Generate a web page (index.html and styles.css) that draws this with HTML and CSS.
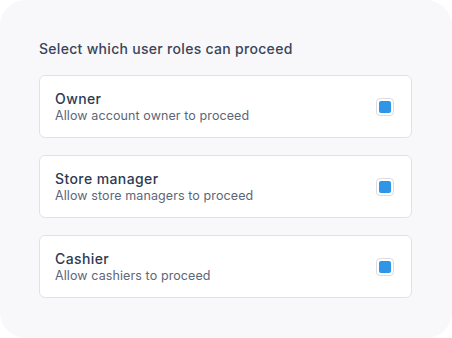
FILE: index.html
```html
<!DOCTYPE html>
<html lang="en">
<head>
  <meta charset="UTF-8">
  <title>User roles</title>
  <link rel="stylesheet" href="styles.css">
</head>
<body>
  <div class="panel">
    <h2 class="heading">Select which user roles can proceed</h2>
    <div class="roles">
      <label class="role">
        <div class="role-text">
          <div class="role-title">Owner</div>
          <div class="role-desc">Allow account owner to proceed</div>
        </div>
        <span class="check"><span class="check-fill"></span></span>
      </label>
      <label class="role">
        <div class="role-text">
          <div class="role-title">Store manager</div>
          <div class="role-desc">Allow store managers to proceed</div>
        </div>
        <span class="check"><span class="check-fill"></span></span>
      </label>
      <label class="role">
        <div class="role-text">
          <div class="role-title">Cashier</div>
          <div class="role-desc">Allow cashiers to proceed</div>
        </div>
        <span class="check"><span class="check-fill"></span></span>
      </label>
    </div>
  </div>
</body>
</html>
```

FILE: styles.css
```css
html, body {
  margin: 0;
  background-color: #fff;
}
body {
  font-family: Inter, "Open Sans", sans-serif;
  color: #2e3a50;
}
.panel {
  box-sizing: border-box;
  width: 452px;
  height: 338px;
  background-color: #f8f8fa;
  border-radius: 26px;
  padding: 39px 40px 0 39px;
}
.heading {
  margin: 0 0 16px 0;
  font-size: 14px;
  font-weight: 500;
  line-height: 20px;
  letter-spacing: 0.3px;
  color: #3a4459;
}
.roles {
  display: flex;
  flex-direction: column;
  gap: 17px;
}
.role {
  box-sizing: border-box;
  height: 63px;
  display: flex;
  align-items: center;
  justify-content: space-between;
  padding: 0 17px 0 15px;
  background-color: #fff;
  border: 1px solid #e1e1e9;
  border-radius: 6px;
}
.role-title {
  font-size: 14px;
  font-weight: 500;
  line-height: 18px;
  letter-spacing: 0.4px;
  color: #2e3a50;
}
.role-desc {
  font-size: 12.5px;
  line-height: 16px;
  letter-spacing: 0.1px;
  color: #5d6679;
}
.check {
  box-sizing: border-box;
  width: 18px;
  height: 18px;
  border: 1px solid #dcdce6;
  border-radius: 4px;
  display: flex;
  align-items: center;
  justify-content: center;
  background-color: #fff;
}
.check-fill {
  width: 12px;
  height: 12px;
  border-radius: 2px;
  background-color: #2f95e6;
}
```
